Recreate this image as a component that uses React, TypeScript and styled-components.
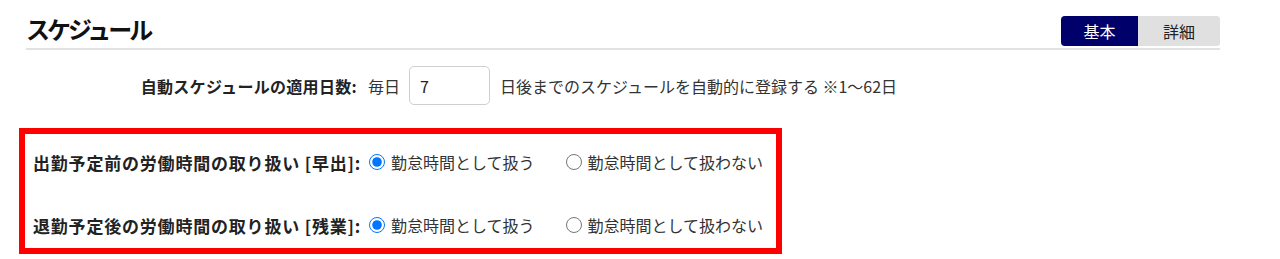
import React, { useState } from 'react';
import styled, { createGlobalStyle } from 'styled-components';

const GlobalStyle = createGlobalStyle`
  html, body {
    margin: 0;
    padding: 0;
    background: #ffffff;
  }
  body {
    font-family: "Noto Sans CJK JP", "Noto Sans", sans-serif;
    color: #333333;
  }
`;

const Page = styled.div`
  width: 1280px;
  height: 259px;
  overflow: hidden;
`;

const Header = styled.div`
  display: flex;
  align-items: center;
  justify-content: space-between;
  margin: 0 60px 0 26px;
  padding: 16px 0 2px;
  border-bottom: 2px solid #e2e2e2;
`;

const Title = styled.h1`
  margin: 0;
  font-size: 24px;
  line-height: 30px;
  font-weight: 700;
  letter-spacing: -3px;
  color: #111111;
  transform: translateY(-2px);
`;

const Toggle = styled.div`
  display: flex;
  height: 30px;
  border-radius: 4px;
  overflow: hidden;
  background: #e0e0e0;
`;

const ToggleButton = styled.button<{ $active: boolean; $width: number }>`
  width: ${({ $width }) => $width}px;
  height: 30px;
  border: 0;
  padding: 0;
  font-family: inherit;
  font-size: 16px;
  line-height: 30px;
  cursor: pointer;
  background: ${({ $active }) => ($active ? '#00006b' : '#e0e0e0')};
  color: ${({ $active }) => ($active ? '#ffffff' : '#222222')};
`;

const Settings = styled.div`
  padding: 16px 0 0 26px;
`;

const FieldRow = styled.div<{ $labelWidth: number }>`
  display: grid;
  grid-template-columns: ${({ $labelWidth }) => $labelWidth}px auto;
  column-gap: 11px;
  align-items: center;
  justify-content: start;
`;

const FieldLabel = styled.div<{ $size: number; $spacing: number }>`
  text-align: right;
  font-weight: 700;
  font-size: ${({ $size }) => $size}px;
  letter-spacing: ${({ $spacing }) => $spacing}px;
  color: #222222;
  white-space: nowrap;
`;

const Inline = styled.div`
  display: flex;
  align-items: center;
  gap: 9px;
  font-size: 16px;
  white-space: nowrap;
`;

const DaysInput = styled.input`
  box-sizing: border-box;
  width: 81px;
  height: 39px;
  padding: 0 10px;
  border: 1px solid #cfcfcf;
  border-radius: 5px;
  font-family: inherit;
  font-size: 16px;
  color: #222222;
  margin-right: 1px;
`;

const Highlight = styled.div`
  box-sizing: border-box;
  width: 763px;
  margin: 23px 0 0 19px;
  padding: 12px 8px 7px;
  border: 6px solid #ff0000;
  display: grid;
  row-gap: 31px;
`;

const RadioGroup = styled.div`
  display: flex;
  align-items: center;
  gap: 31px;
  height: 32px;
`;

const RadioOption = styled.label`
  display: flex;
  align-items: center;
  gap: 6px;
  font-size: 16px;
  color: #333333;
  white-space: nowrap;
  cursor: pointer;
`;

const Radio = styled.input`
  width: 16px;
  height: 16px;
  margin: 0;
  accent-color: #0075ff;
`;

type Rule = { key: string; label: string };

const rules: Rule[] = [
  { key: 'early', label: '出勤予定前の労働時間の取り扱い [早出]:' },
  { key: 'overtime', label: '退勤予定後の労働時間の取り扱い [残業]:' },
];

export default function App() {
  const [mode, setMode] = useState<'basic' | 'detail'>('basic');
  const [days, setDays] = useState('7');
  const [values, setValues] = useState<Record<string, string>>({ early: 'yes', overtime: 'yes' });

  return (
    <Page>
      <GlobalStyle />
      <Header>
        <Title>スケジュール</Title>
        <Toggle>
          <ToggleButton $active={mode === 'basic'} $width={77} onClick={() => setMode('basic')}>
            基本
          </ToggleButton>
          <ToggleButton $active={mode === 'detail'} $width={82} onClick={() => setMode('detail')}>
            詳細
          </ToggleButton>
        </Toggle>
      </Header>

      <Settings>
        <FieldRow $labelWidth={331}>
          <FieldLabel $size={16} $spacing={0.3}>自動スケジュールの適用日数:</FieldLabel>
          <Inline>
            毎日
            <DaysInput value={days} onChange={e => setDays(e.target.value)} />
            日後までのスケジュールを自動的に登録する ※1～62日
          </Inline>
        </FieldRow>
      </Settings>

      <Highlight>
        {rules.map(rule => (
          <FieldRow key={rule.key} $labelWidth={325}>
            <FieldLabel $size={17} $spacing={0.8}>{rule.label}</FieldLabel>
            <RadioGroup>
              <RadioOption>
                <Radio
                  type="radio"
                  name={rule.key}
                  checked={values[rule.key] === 'yes'}
                  onChange={() => setValues(v => ({ ...v, [rule.key]: 'yes' }))}
                />
                勤怠時間として扱う
              </RadioOption>
              <RadioOption>
                <Radio
                  type="radio"
                  name={rule.key}
                  checked={values[rule.key] === 'no'}
                  onChange={() => setValues(v => ({ ...v, [rule.key]: 'no' }))}
                />
                勤怠時間として扱わない
              </RadioOption>
            </RadioGroup>
          </FieldRow>
        ))}
      </Highlight>
    </Page>
  );
}
